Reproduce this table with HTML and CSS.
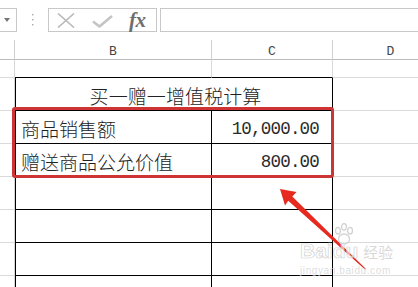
FILE: index.html
```html
<!DOCTYPE html>
<html lang="zh-CN">
<head>
<meta charset="utf-8">
<title>买一赠一增值税计算</title>
<link rel="stylesheet" href="styles.css">
</head>
<body>
<div class="app">
  <div class="toolbar">
    <div class="namebox"><span class="caret"></span></div>
    <svg class="grip" width="3" height="12" viewBox="0 0 3 12"><rect x="1" y="0" width="1.4" height="1.4" fill="#a8a8a8"/><rect x="1" y="5" width="1.4" height="1.4" fill="#a8a8a8"/><rect x="1" y="10" width="1.4" height="1.4" fill="#a8a8a8"/></svg>
    <div class="fbtns">
      <svg class="ico-x" width="18" height="15" viewBox="0 0 18 15"><path d="M1 0.5 L17 14.5 M17 0.5 L1 14.5" stroke="#b9b9b9" stroke-width="1.6" fill="none"/></svg>
      <svg class="ico-check" width="21" height="13" viewBox="0 0 21 13"><path d="M1 6.5 L7.5 11.5 L20 1" stroke="#c4c4c4" stroke-width="2.6" fill="none" stroke-linejoin="round"/></svg>
      <span class="fx">fx</span>
    </div>
    <div class="finput"></div>
  </div>

  <div class="sheet">
    <div class="cell rh hdr"></div>
    <div class="cell colh hdr">B</div>
    <div class="cell colh hdr">C</div>
    <div class="cell colh hdr">D</div>

    <div class="cell rh"></div>
    <div class="cell b top"></div>
    <div class="cell c top"></div>
    <div class="cell d"></div>

    <div class="cell rh"></div>
    <div class="cell tb title">买一赠一增值税计算</div>
    <div class="cell d"></div>

    <div class="cell rh"></div>
    <div class="cell tb label">商品销售额</div>
    <div class="cell tc num">10,000.00</div>
    <div class="cell d"></div>

    <div class="cell rh"></div>
    <div class="cell tb label">赠送商品公允价值</div>
    <div class="cell tc num">800.00</div>
    <div class="cell d"></div>

    <div class="cell rh"></div>
    <div class="cell tb"></div>
    <div class="cell tc"></div>
    <div class="cell d"></div>

    <div class="cell rh"></div>
    <div class="cell tb"></div>
    <div class="cell tc"></div>
    <div class="cell d"></div>

    <div class="cell rh"></div>
    <div class="cell tb"></div>
    <div class="cell tc"></div>
    <div class="cell d"></div>

    <div class="cell rh"></div>
    <div class="cell tb"></div>
    <div class="cell tc"></div>
    <div class="cell d"></div>
  </div>

  <div class="highlight"></div>

  <svg class="arrow" width="418" height="287" viewBox="0 0 418 287">
    <path d="M280 189 L296.5 192 L292.3 196.6 L366 269 L365 269.6 L288.2 200.8 L285 205.5 Z" fill="#e62a1f"/>
  </svg>

  <div class="watermark">
    <div class="wm-top">
      <span class="wm-bai">Bai</span>
      <span class="wm-du">
        <svg class="paw" width="22" height="22" viewBox="0 0 20 20">
          <g fill="rgba(255,255,255,0.5)" stroke="#d2d2d2" stroke-width="1.2">
            <ellipse cx="4.5" cy="7" rx="2.2" ry="3"/>
            <ellipse cx="10" cy="3.5" rx="2.2" ry="3"/>
            <ellipse cx="15.5" cy="7" rx="2.2" ry="3"/>
            <ellipse cx="10" cy="14.5" rx="5" ry="4.5"/>
          </g>
        </svg>du</span>
      <span class="wm-jy">经验</span>
    </div>
    <div class="wm-url">jingyan.baidu.com</div>
  </div>
</div>
</body>
</html>
```

FILE: styles.css
```css
* { box-sizing: border-box; }

html, body {
  margin: 0;
  padding: 0;
  background: #ffffff;
}

.app {
  position: relative;
  width: 418px;
  height: 287px;
  overflow: hidden;
  font-family: "Noto Sans CJK SC", "Liberation Sans", sans-serif;
}

/* ---------- formula toolbar ---------- */
.toolbar {
  display: flex;
  align-items: flex-start;
  height: 40px;
  padding-top: 8px;
}

.namebox {
  flex: none;
  width: 37px;
  height: 24px;
  margin-left: -20px;
  border: 1px solid #c8c8c8;
  display: flex;
  align-items: center;
}

.caret {
  margin-left: 23px;
  width: 0;
  height: 0;
  border-left: 3px solid transparent;
  border-right: 3px solid transparent;
  border-top: 4px solid #777;
}

.grip {
  flex: none;
  margin-left: 14px;
  margin-top: 6px;
}

.fbtns {
  flex: none;
  display: flex;
  align-items: center;
  width: 109px;
  height: 24px;
  margin-left: 14px;
  border: 1px solid #c8c8c8;
}

.ico-x {
  margin-left: 8px;
}

.ico-check {
  margin-left: 17px;
  margin-top: 2px;
}

.fx {
  margin-left: 16px;
  margin-top: -1px;
  font-family: "Liberation Serif", serif;
  font-style: italic;
  font-weight: bold;
  font-size: 21px;
  line-height: 20px;
  color: #6e6e6e;
  letter-spacing: -0.5px;
}

.finput {
  flex: 1;
  height: 24px;
  margin-left: 3px;
  margin-right: -4px;
  border: 1px solid #c8c8c8;
}

/* ---------- sheet grid ---------- */
.sheet {
  display: grid;
  grid-template-columns: 15px 197px 121px 116px;
  grid-template-rows: 20px 18px repeat(7, 33px);
}

.cell {
  border-right: 1px solid #dadada;
  border-bottom: 1px solid #dadada;
  color: #222;
  font-size: 19px;
  display: flex;
  align-items: center;
  white-space: nowrap;
}

.cell.hdr {
  border-bottom-color: #bdbdbd;
  border-right-color: #d0d0d0;
}

.colh {
  justify-content: center;
  font-family: "Liberation Mono", monospace;
  font-size: 13px;
  color: #444;
  padding-top: 3px;
}

.rh {
  border-right-color: #d6d6d6;
}

.b.top,
.c.top {
  border-bottom-color: #000;
}

.tb {
  border-left: 1px solid #000;
  border-right-color: #000;
  border-bottom-color: #000;
}

.tc {
  border-right-color: #000;
  border-bottom-color: #000;
}

.title {
  grid-column: span 2;
  justify-content: center;
  padding-left: 3px;
  padding-top: 2px;
  font-weight: 300;
  letter-spacing: 0.1px;
}

.label {
  padding-left: 5px;
  padding-top: 3px;
  font-weight: 300;
}

.num {
  justify-content: flex-end;
  padding-right: 13px;
  padding-top: 3px;
  font-family: "Liberation Mono", monospace;
  font-size: 17.5px;
  letter-spacing: -0.8px;
  color: #2a2a2a;
}

/* ---------- overlays ---------- */
.highlight {
  position: absolute;
  left: 12px;
  top: 107px;
  width: 322px;
  height: 71px;
  border: 3px solid #cf3434;
  border-radius: 3px;
}

.arrow {
  position: absolute;
  left: 0;
  top: 0;
}

.watermark {
  position: absolute;
  left: 300px;
  top: 228px;
  font-family: "Liberation Sans", sans-serif;
}

.wm-top {
  display: flex;
  align-items: flex-end;
  height: 33px;
}

.wm-bai,
.wm-du {
  font-size: 21px;
  font-weight: bold;
  line-height: 20px;
  -webkit-text-stroke: 0.7px rgba(200, 200, 200, 0.85);
  color: rgba(255, 255, 255, 0.6);
}

.wm-du {
  position: relative;
}

.paw {
  position: absolute;
  left: 0;
  top: -18px;
}

.wm-jy {
  margin-left: 5px;
  font-family: "Noto Sans CJK SC", sans-serif;
  font-size: 15px;
  line-height: 18px;
  color: rgba(205, 205, 205, 0.75);
}

.wm-url {
  margin-top: 4px;
  font-size: 10px;
  letter-spacing: 0.6px;
  color: rgba(210, 210, 210, 0.75);
}
```
